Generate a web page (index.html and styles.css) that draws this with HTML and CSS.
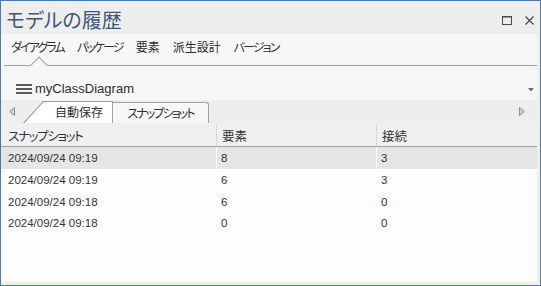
FILE: index.html
```html
<!DOCTYPE html>
<html lang="ja">
<head>
<meta charset="utf-8">
<link rel="stylesheet" href="styles.css">
</head>
<body>
<div class="window">
  <div class="titlebar">
    <span class="title">モデルの履歴</span>
    <div class="wbtns">
      <svg class="wbtn" width="10" height="9" viewBox="0 0 10 9"><rect x="0.5" y="0.5" width="9" height="8" fill="none" stroke="#4a4a4a"/><line x1="0" y1="1" x2="10" y2="1" stroke="#4a4a4a"/></svg>
      <svg class="wbtn" width="9" height="9" viewBox="0 0 9 9"><path d="M0.5 0.5 L8.5 8.5 M8.5 0.5 L0.5 8.5" stroke="#4a4a4a" stroke-width="1.3"/></svg>
    </div>
  </div>
  <div class="panel">
    <nav class="nav">
      <span class="nav-item kana">ダイアグラム</span>
      <span class="nav-item kana">パッケージ</span>
      <span class="nav-item">要素</span>
      <span class="nav-item">派生設計</span>
      <span class="nav-item kana">バージョン</span>
    </nav>
    <div class="picker">
      <svg class="menu-icon" width="16" height="10" viewBox="0 0 16 10"><rect x="0" y="0" width="16" height="2" fill="#5a5a5a"/><rect x="0" y="4" width="16" height="2" fill="#5a5a5a"/><rect x="0" y="8" width="16" height="2" fill="#5a5a5a"/></svg>
      <span class="picker-text">myClassDiagram</span>
      <svg class="picker-caret" width="6" height="4" viewBox="0 0 6 4"><path d="M0 0 L6 0 L3 3.5 Z" fill="#6a6a6a"/></svg>
    </div>
    <div class="tabstrip">
      <svg class="arrow arrow-left" width="6" height="9" viewBox="0 0 6 9"><path d="M5.5 0.5 L0.7 4.5 L5.5 8.5 Z" fill="#cfcfcf" stroke="#8c8c8c"/></svg>
      <div class="tabs">
        <div class="tab-active"><div class="tab-active-inner">自動保存</div></div>
        <div class="tab"><span class="kana">スナップショット</span></div>
      </div>
      <svg class="arrow arrow-right" width="6" height="9" viewBox="0 0 6 9"><path d="M0.5 0.5 L5.3 4.5 L0.5 8.5 Z" fill="#cfcfcf" stroke="#8c8c8c"/></svg>
    </div>
    <div class="grid">
      <div class="row head">
        <div class="cell c1"><span class="kana-head">スナップショット</span></div>
        <div class="cell c2">要素</div>
        <div class="cell c3">接続</div>
      </div>
      <div class="row selected">
        <div class="cell c1 num">2024/09/24 09:19</div>
        <div class="cell c2 num">8</div>
        <div class="cell c3 num">3</div>
      </div>
      <div class="row">
        <div class="cell c1 num">2024/09/24 09:19</div>
        <div class="cell c2 num">6</div>
        <div class="cell c3 num">3</div>
      </div>
      <div class="row">
        <div class="cell c1 num">2024/09/24 09:18</div>
        <div class="cell c2 num">6</div>
        <div class="cell c3 num">0</div>
      </div>
      <div class="row">
        <div class="cell c1 num">2024/09/24 09:18</div>
        <div class="cell c2 num">0</div>
        <div class="cell c3 num">0</div>
      </div>
    </div>
  </div>
</div>
</body>
</html>
```
FILE: styles.css
```css
* { box-sizing: border-box; }
html, body { margin: 0; padding: 0; background: #fff; }
body {
  font-family: "Noto Sans CJK JP", sans-serif;
  font-feature-settings: "palt";
  color: #333;
}
.kana { letter-spacing: -1.9px; }
.kana-head { letter-spacing: -1.3px; }
.window {
  width: 541px;
  height: 286px;
  border: 1px solid #4f79a8;
  background: #eeeeee;
  display: flex;
  flex-direction: column;
}
.titlebar {
  height: 33px;
  flex: none;
  display: flex;
  align-items: center;
  padding-left: 5px;
}
.title {
  font-size: 20px;
  line-height: 24px;
  color: #3d5878;
  margin-top: 5px;
}
.wbtns {
  margin-left: auto;
  display: flex;
  align-items: center;
  gap: 13px;
  margin-right: 6px;
  margin-top: 6px;
}
.wbtn { display: block; }
.panel {
  flex: 1;
  margin: 0 3px 3px 0;
  background: #fdfdfd;
  display: flex;
  flex-direction: column;
}
.nav {
  position: relative;
  height: 32px;
  flex: none;
  background: #f7f7f7;
  border-bottom: 1px solid #a0a0a0;
  margin-left: 3px;
  padding: 5px 0 0 7px;
  display: flex;
  gap: 13px;
  font-size: 12px;
  line-height: 16px;
}
.nav::before {
  content: "";
  position: absolute;
  left: -3px;
  top: 0;
  width: 3px;
  height: 32px;
  background: #f7f7f7;
}
.nav::after {
  content: "";
  position: absolute;
  left: 29px;
  top: 25px;
  width: 11px;
  height: 11px;
  background: #f7f7f7;
  border-top: 1px solid #a0a0a0;
  border-left: 1px solid #a0a0a0;
  transform: rotate(45deg);
}
.nav-item { color: #2e2e2e; }
.picker {
  height: 34px;
  flex: none;
  background: #f7f7f7;
  display: flex;
  align-items: center;
  padding: 10px 0 0 15px;
}
.menu-icon { display: block; margin-top: 1px; }
.picker-text {
  font-family: "Liberation Sans", "Noto Sans CJK JP", sans-serif;
  font-size: 13px;
  margin-left: 3px;
  color: #2e2e2e;
}
.picker-caret { margin-left: auto; margin-right: 3px; margin-top: 4px; display: block; }
.tabstrip {
  height: 23px;
  flex: none;
  background: #eeeeee;
  display: flex;
  align-items: flex-end;
}
.arrow { display: block; align-self: center; }
.arrow-left { margin-left: 8px; }
.arrow-right { margin-left: auto; margin-right: 12px; }
.tabs {
  display: flex;
  align-items: flex-end;
  margin-left: 8px;
  height: 22px;
}
.tab-active {
  width: 90px;
  height: 22px;
  background: #a0a0a0;
  clip-path: polygon(0 100%, 20px 0, 100% 0, 100% 100%);
  padding: 1px 1px 0 0;
}
.tab-active-inner {
  height: 21px;
  background: #ffffff;
  clip-path: polygon(1.5px 100%, 20.5px 0, 100% 0, 100% 100%);
  font-size: 12px;
  line-height: 20px;
  padding-left: 32px;
  color: #2e2e2e;
}
.tab {
  width: 96px;
  height: 21px;
  background: #f7f7f7;
  border: 1px solid #a0a0a0;
  border-left: none;
  border-bottom: none;
  border-top-right-radius: 3px;
  font-size: 12px;
  line-height: 19px;
  text-align: center;
  color: #2e2e2e;
}
.grid { display: flex; flex-direction: column; }
.row {
  display: flex;
  height: 21.7px;
  align-items: center;
  background: #fdfdfd;
}
.row.head {
  height: 24px;
  background: #f0f0f0;
  border-bottom: 1px solid #a0a0a0;
  align-items: stretch;
  padding-top: 1px;
}
.row.selected { background: #e5e5e5; height: 22px; }
.cell {
  height: 100%;
  display: flex;
  align-items: center;
  font-size: 12.5px;
  border-right: 1px solid transparent;
  white-space: nowrap;
}
.row.selected .cell { border-right-color: #ffffff; }
.row.head .cell { border-right-color: #d8d8d8; }
.c1 { width: 216px; padding-left: 7px; }
.c2 { width: 160px; padding-left: 5px; }
.c3 { flex: 1; padding-left: 5px; border-right: none !important; }
.num {
  font-family: "Liberation Sans", sans-serif;
  font-size: 11.5px;
  color: #333;
}
.c1.num { padding-left: 7px; }
.c2.num, .c3.num { padding-left: 4px; }
```
